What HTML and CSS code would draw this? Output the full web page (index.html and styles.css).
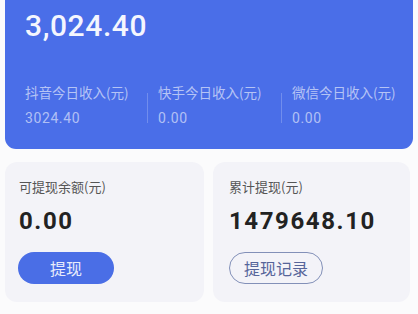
FILE: index.html
```html
<!DOCTYPE html>
<html lang="zh">
<head>
<meta charset="utf-8">
<link rel="stylesheet" href="styles.css">
</head>
<body>
<div class="page">
  <section class="hero">
    <div class="total">3,024.40</div>
    <div class="stats">
      <div class="stat">
        <div class="stat-label">抖音今日收入(元)</div>
        <div class="stat-value">3024.40</div>
      </div>
      <div class="divider"></div>
      <div class="stat pad">
        <div class="stat-label">快手今日收入(元)</div>
        <div class="stat-value">0.00</div>
      </div>
      <div class="divider"></div>
      <div class="stat pad">
        <div class="stat-label">微信今日收入(元)</div>
        <div class="stat-value">0.00</div>
      </div>
    </div>
  </section>
  <div class="cards">
    <section class="card">
      <div class="card-label">可提现余额(元)</div>
      <div class="card-value">0.00</div>
      <button class="btn btn-primary">提现</button>
    </section>
    <section class="card card-right">
      <div class="card-label">累计提现(元)</div>
      <div class="card-value">1479648.10</div>
      <button class="btn btn-outline">提现记录</button>
    </section>
  </div>
</div>
</body>
</html>
```

FILE: styles.css
```css
html, body {
  margin: 0;
  padding: 0;
  background: #fbfbfc;
}
body {
  width: 418px;
  height: 314px;
  overflow: hidden;
  font-family: Roboto, "Noto Sans CJK SC", sans-serif;
}
.page {
  padding: 0 5px 0 5px;
}
.hero {
  background: #4a6ee8;
  height: 149px;
  box-sizing: border-box;
  border-radius: 0 0 11px 11px;
  padding: 8px 0 0 20px;
  color: #fff;
}
.total {
  font-size: 30px;
  line-height: 36px;
  font-weight: 500;
  letter-spacing: 0.6px;
  color: #f4f6fe;
}
.stats {
  margin-top: 39px;
  display: grid;
  grid-template-columns: 122px 1px 133px 1px 1fr;
  align-items: center;
}
.stat.pad {
  padding-left: 10px;
}
.stat-label {
  font-family: "Noto Sans CJK SC", sans-serif;
  font-size: 13.5px;
  line-height: 18px;
  color: rgba(255, 255, 255, 0.6);
}
.stat-value {
  margin-top: 7px;
  font-size: 14px;
  line-height: 20px;
  letter-spacing: 0.6px;
  color: rgba(255, 255, 255, 0.58);
}
.divider {
  width: 1px;
  height: 30px;
  margin-top: 4px;
  background: rgba(255, 255, 255, 0.22);
}
.cards {
  margin-top: 13px;
  display: grid;
  grid-template-columns: 199px 197px;
  column-gap: 9px;
}
.card {
  background: #f3f3f8;
  border-radius: 12px;
  height: 140px;
  box-sizing: border-box;
  padding: 16px 14px 0 14px;
}
.card-right {
  padding-left: 16px;
}
.card-label {
  font-family: "Noto Sans CJK SC", sans-serif;
  font-size: 13px;
  line-height: 18px;
  color: #555;
}
.card-value {
  margin-top: 10px;
  font-size: 24px;
  line-height: 30px;
  font-weight: 700;
  letter-spacing: 1.6px;
  color: #222;
}
.btn {
  display: block;
  margin-top: 16px;
  height: 32px;
  border-radius: 16px;
  font-family: "Noto Sans CJK SC", sans-serif;
  font-size: 16px;
  line-height: 20px;
  box-sizing: border-box;
  cursor: pointer;
}
.btn-primary {
  width: 96px;
  margin-left: -1px;
  border: none;
  background: #4a6ee6;
  color: #e8ecfb;
}
.btn-outline {
  width: 94px;
  border: 1.5px solid #8290b8;
  background: transparent;
  color: #56659a;
  padding: 0;
}
```
